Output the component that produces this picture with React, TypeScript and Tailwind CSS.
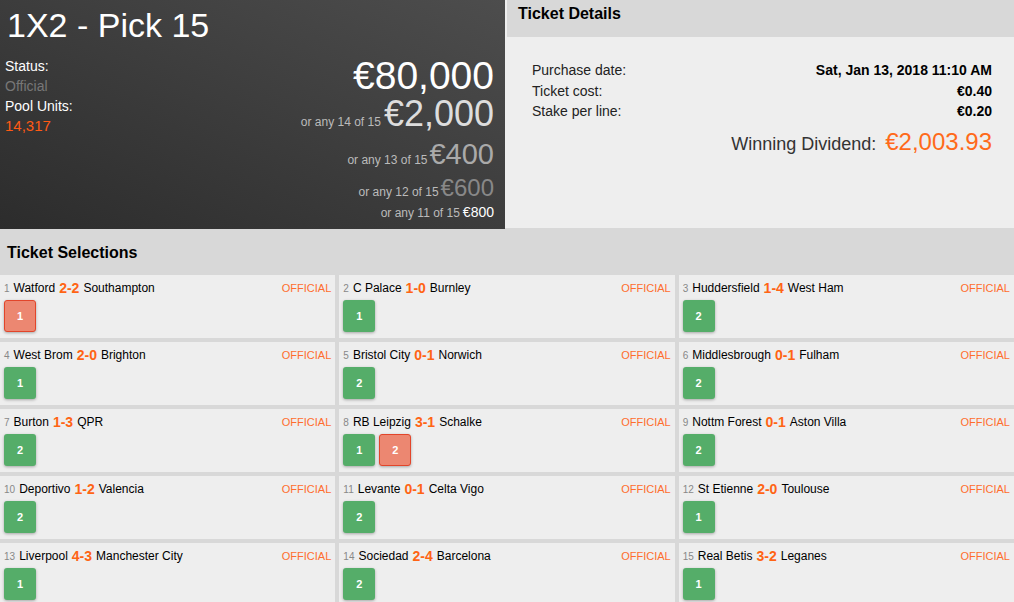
import React from "react";

type Sel = { n: number; home: string; score: string; away: string; picks: { v: string; win: boolean }[] };

const sels: Sel[] = [
  { n: 1, home: "Watford", score: "2-2", away: "Southampton", picks: [{ v: "1", win: false }] },
  { n: 2, home: "C Palace", score: "1-0", away: "Burnley", picks: [{ v: "1", win: true }] },
  { n: 3, home: "Huddersfield", score: "1-4", away: "West Ham", picks: [{ v: "2", win: true }] },
  { n: 4, home: "West Brom", score: "2-0", away: "Brighton", picks: [{ v: "1", win: true }] },
  { n: 5, home: "Bristol City", score: "0-1", away: "Norwich", picks: [{ v: "2", win: true }] },
  { n: 6, home: "Middlesbrough", score: "0-1", away: "Fulham", picks: [{ v: "2", win: true }] },
  { n: 7, home: "Burton", score: "1-3", away: "QPR", picks: [{ v: "2", win: true }] },
  { n: 8, home: "RB Leipzig", score: "3-1", away: "Schalke", picks: [{ v: "1", win: true }, { v: "2", win: false }] },
  { n: 9, home: "Nottm Forest", score: "0-1", away: "Aston Villa", picks: [{ v: "2", win: true }] },
  { n: 10, home: "Deportivo", score: "1-2", away: "Valencia", picks: [{ v: "2", win: true }] },
  { n: 11, home: "Levante", score: "0-1", away: "Celta Vigo", picks: [{ v: "2", win: true }] },
  { n: 12, home: "St Etienne", score: "2-0", away: "Toulouse", picks: [{ v: "1", win: true }] },
  { n: 13, home: "Liverpool", score: "4-3", away: "Manchester City", picks: [{ v: "1", win: true }] },
  { n: 14, home: "Sociedad", score: "2-4", away: "Barcelona", picks: [{ v: "2", win: true }] },
  { n: 15, home: "Real Betis", score: "3-2", away: "Leganes", picks: [{ v: "1", win: true }] },
];

export default function App() {
  return (
    <div className="w-[1014px] h-[602px] overflow-hidden bg-[#d8d8d8] font-['Liberation_Sans',Arial,sans-serif]">
      <div className="flex h-[230px]">
        <div className="w-[505px] h-[229px] bg-[linear-gradient(to_bottom_left,#4d4d4d,#2c2c2c)] text-white relative">
          <div className="absolute left-[7px] top-[5px] text-[34px] leading-[40px]">1X2 - Pick 15</div>
          <div className="absolute left-[5px] top-[56px] text-[14px] leading-[20px]">
            <div>Status:</div>
            <div className="text-[#777777]">Official</div>
            <div>Pool Units:</div>
            <div className="text-[#ff5a14] text-[15px]">14,317</div>
          </div>
          <div className="absolute right-[11px] top-[54px] flex flex-col items-end">
            <div className="text-[39px] leading-[44px] text-white">€80,000</div>
            <div className="flex items-baseline h-[36px] leading-[36px] -mt-[2px]">
              <span className="text-[12px] text-[#bbbbbb] mr-[3px]">or any 14 of 15</span>
              <span className="text-[36px] text-[#dddddd]">€2,000</span>
            </div>
            <div className="flex items-baseline h-[38px] leading-[38px] mt-[3px]">
              <span className="text-[12px] text-[#bbbbbb] mr-[2px]">or any 13 of 15</span>
              <span className="text-[29px] text-[#aaaaaa]">€400</span>
            </div>
            <div className="flex items-baseline h-[30px] leading-[30px]">
              <span className="text-[12px] text-[#bbbbbb] mr-[2px]">or any 12 of 15</span>
              <span className="text-[24px] text-[#888888]">€600</span>
            </div>
            <div className="flex items-baseline h-[22px] leading-[22px] -mt-[2px]">
              <span className="text-[12px] text-[#bbbbbb] mr-[3px]">or any 11 of 15</span>
              <span className="text-[14px] text-white">€800</span>
            </div>
          </div>
        </div>
        <div className="w-[2px] h-[228px] bg-[#eeeeee]"></div>
        <div className="flex-1 h-[228px] flex flex-col">
          <div className="h-[37px] bg-[#d8d8d8] pl-[11px] pt-[5px] text-[16px] font-bold text-black leading-[18px]">Ticket Details</div>
          <div className="flex-1 bg-[#eeeeee] pl-[25px] pr-[22px] pt-[23px] text-[#222]">
            <div className="flex justify-between items-center h-[21px]">
              <span className="text-[14px]">Purchase date:</span>
              <span className="text-[14px] font-bold text-black">Sat, Jan 13, 2018 11:10 AM</span>
            </div>
            <div className="flex justify-between items-center h-[20px]">
              <span className="text-[14px]">Ticket cost:</span>
              <span className="text-[14px] font-bold text-black">€0.40</span>
            </div>
            <div className="flex justify-between items-center h-[21px]">
              <span className="text-[14px]">Stake per line:</span>
              <span className="text-[14px] font-bold text-black">€0.20</span>
            </div>
            <div className="flex justify-end items-baseline mt-[2px]">
              <span className="text-[18px] text-[#333] mr-[9px]">Winning Dividend:</span>
              <span className="text-[24px] text-[#ff6a1a]">€2,003.93</span>
            </div>
          </div>
        </div>
      </div>
      <div className="h-[45px] flex items-center pl-[7px] text-[16px] font-bold text-black">Ticket Selections</div>
      <div className="grid grid-cols-3 gap-x-[4px] gap-y-[4px]">
        {sels.map((s) => (
          <div key={s.n} className="h-[63px] bg-[#eeeeee] px-[4px] pt-[5px]">
            <div className="flex items-center h-[16px]">
              <span className="text-[10px] text-[#888888] mr-[4px]">{s.n}</span>
              <span className="text-[12px] text-black">{s.home}</span>
              <span className="text-[14px] font-bold text-[#ff6414] mx-[4px]">{s.score}</span>
              <span className="text-[12px] text-black">{s.away}</span>
              <span className="ml-auto text-[11px] text-[#ff6d2d]">OFFICIAL</span>
            </div>
            <div className="flex gap-[4px] mt-[4px]">
              {s.picks.map((p, i) => (
                <div
                  key={i}
                  className={
                    p.win
                      ? "w-[32px] h-[32px] rounded-[3px] bg-[#55ad69] flex items-center justify-center text-white text-[11px] font-bold shadow-[0_1px_3px_rgba(0,0,0,0.3)]"
                      : "w-[32px] h-[32px] rounded-[3px] bg-[#ec8771] border border-[#e2452a] flex items-center justify-center text-white text-[11px] font-bold shadow-[0_1px_3px_rgba(0,0,0,0.3)]"
                  }
                >
                  {p.v}
                </div>
              ))}
            </div>
          </div>
        ))}
      </div>
    </div>
  );
}
